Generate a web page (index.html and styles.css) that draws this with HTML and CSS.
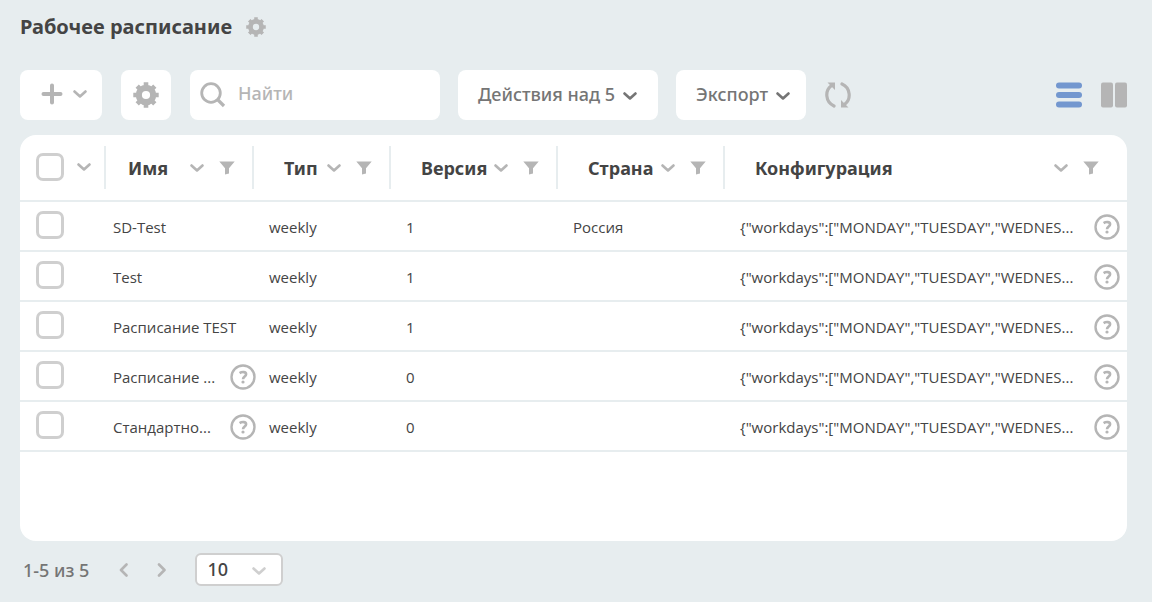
FILE: index.html
```html
<!DOCTYPE html>
<html lang="ru">
<head>
<meta charset="utf-8">
<title>Рабочее расписание</title>
<link rel="stylesheet" href="styles.css">
</head>
<body>
<svg class="sprite" aria-hidden="true">
  <symbol id="gear" viewBox="0 0 26 26"><circle cx="13" cy="13" r="7.200" fill="none" stroke="currentColor" stroke-width="6.200"/><g stroke="currentColor" stroke-width="4.600"><path d="M13 .3V5M13 21v4.700M.3 13H5M21 13h4.700"/><path d="m4.200 4.200 3 3M18.800 18.800l3 3M21.800 4.200l-3 3M4.200 21.800l3-3"/></g></symbol>
  <symbol id="chevron" viewBox="0 0 14 8"><path fill="none" stroke="currentColor" stroke-width="2.600" stroke-linecap="round" stroke-linejoin="round" d="M1.500 1.500 7 6.500l5.500-5"/></symbol>
  <symbol id="funnel" viewBox="0 0 16 14"><path fill="currentColor" d="M.3.500h15.400L10 7.200v5.300l-4 1V7.200z"/></symbol>
  <symbol id="help" viewBox="0 0 26 26"><circle cx="13" cy="13" r="11.500" fill="none" stroke="currentColor" stroke-width="2.400"/><path fill="none" stroke="currentColor" stroke-width="2.600" d="M9.600 9.100c2.300-1.500 6.500-1.600 6.500 1.200 0 2.200-3.100 2.300-3.100 5"/><circle cx="13" cy="18" r="1.600" fill="currentColor"/></symbol>
</svg>

<header class="page-head">
  <h1 class="title">Рабочее расписание</h1>
  <button class="icon-button" aria-label="Настройки страницы"><svg class="gear-small"><use href="#gear"/></svg></button>
</header>

<div class="toolbar">
  <button class="tool add" aria-label="Добавить">
    <svg class="plus" viewBox="0 0 22 22"><path stroke="currentColor" stroke-width="4" stroke-linecap="round" d="M11 2.500v17M2.500 11h17"/></svg>
    <svg class="chevron"><use href="#chevron"/></svg>
  </button>
  <button class="tool settings" aria-label="Настройки"><svg class="gear"><use href="#gear"/></svg></button>
  <label class="search">
    <svg class="lens" viewBox="0 0 26 26"><g fill="none" stroke="currentColor" stroke-width="2.800"><circle cx="11" cy="11" r="9.300"/><path stroke-width="3.200" d="m17.500 17.500 6.500 6.500"/></g></svg>
    <input class="search-input" type="text" placeholder="Найти" aria-label="Найти">
  </label>
  <button class="tool labelled">Действия над 5<svg class="chevron"><use href="#chevron"/></svg></button>
  <button class="tool labelled export">Экспорт<svg class="chevron"><use href="#chevron"/></svg></button>
  <button class="icon-button" aria-label="Обновить"><svg class="refresh" viewBox="0 0 26 26"><g fill="none" stroke="currentColor" stroke-width="3.200" stroke-linecap="round"><path d="M9 24C0 20 0 8.500 6 4"/><path d="M17 2c9 4 9 15.500 3 20"/></g><path fill="currentColor" d="M2.500.5H10V8zM23.500 25.500H16V18z"/></svg></button>
  <div class="views">
    <button class="icon-button list-view" aria-label="Список"><svg class="view" viewBox="0 0 26 26"><g fill="currentColor"><rect y="0.500" width="26" height="6" rx="3"/><rect y="10" width="26" height="6" rx="3"/><rect y="19.500" width="26" height="6" rx="3"/></g></svg></button>
    <button class="icon-button" aria-label="Колонки"><svg class="view" viewBox="0 0 26 26"><g fill="currentColor"><rect y="0.500" width="12" height="25" rx="2"/><rect x="14" y="0.500" width="12" height="25" rx="2"/></g></svg></button>
  </div>
</div>

<main class="card">
  <table class="grid">
    <colgroup><col class="c-check"><col class="c-name"><col class="c-type"><col class="c-version"><col class="c-country"><col></colgroup>
    <thead>
      <tr>
        <th><div class="head head-check"><input class="check" type="checkbox" aria-label="Выбрать все"><svg class="chevron"><use href="#chevron"/></svg></div></th>
        <th><div class="head head-name"><span class="label">Имя</span><svg class="chevron"><use href="#chevron"/></svg><svg class="funnel"><use href="#funnel"/></svg></div></th>
        <th><div class="head"><span class="label">Тип</span><svg class="chevron"><use href="#chevron"/></svg><svg class="funnel"><use href="#funnel"/></svg></div></th>
        <th><div class="head"><span class="label">Версия</span><svg class="chevron"><use href="#chevron"/></svg><svg class="funnel"><use href="#funnel"/></svg></div></th>
        <th><div class="head"><span class="label">Страна</span><svg class="chevron"><use href="#chevron"/></svg><svg class="funnel"><use href="#funnel"/></svg></div></th>
        <th><div class="head head-last"><span class="label">Конфигурация</span><svg class="chevron"><use href="#chevron"/></svg><svg class="funnel"><use href="#funnel"/></svg></div></th>
      </tr>
    </thead>
    <tbody>
      <tr>
        <td class="select"><input class="check" type="checkbox" aria-label="SD-Test"></td>
        <td class="name">SD-Test</td><td>weekly</td><td>1</td><td>Россия</td>
        <td><div class="cell"><span>{"workdays":["MONDAY","TUESDAY","WEDNES...</span><svg class="help"><use href="#help"/></svg></div></td>
      </tr>
      <tr>
        <td class="select"><input class="check" type="checkbox" aria-label="Test"></td>
        <td class="name">Test</td><td>weekly</td><td>1</td><td></td>
        <td><div class="cell"><span>{"workdays":["MONDAY","TUESDAY","WEDNES...</span><svg class="help"><use href="#help"/></svg></div></td>
      </tr>
      <tr>
        <td class="select"><input class="check" type="checkbox" aria-label="Расписание TEST"></td>
        <td class="name">Расписание TEST</td><td>weekly</td><td>1</td><td></td>
        <td><div class="cell"><span>{"workdays":["MONDAY","TUESDAY","WEDNES...</span><svg class="help"><use href="#help"/></svg></div></td>
      </tr>
      <tr>
        <td class="select"><input class="check" type="checkbox" aria-label="Расписание"></td>
        <td class="name"><div class="cell cell-name"><span>Расписание ...</span><svg class="help"><use href="#help"/></svg></div></td><td>weekly</td><td>0</td><td></td>
        <td><div class="cell"><span>{"workdays":["MONDAY","TUESDAY","WEDNES...</span><svg class="help"><use href="#help"/></svg></div></td>
      </tr>
      <tr>
        <td class="select"><input class="check" type="checkbox" aria-label="Стандартное расписание"></td>
        <td class="name"><div class="cell cell-name"><span>Стандартно...</span><svg class="help"><use href="#help"/></svg></div></td><td>weekly</td><td>0</td><td></td>
        <td><div class="cell"><span>{"workdays":["MONDAY","TUESDAY","WEDNES...</span><svg class="help"><use href="#help"/></svg></div></td>
      </tr>
    </tbody>
  </table>
</main>

<footer class="pager">
  <span class="range">1-5 из 5</span>
  <div class="steps">
    <button class="icon-button" aria-label="Назад"><svg class="arrow" viewBox="0 0 10 14"><path fill="none" stroke="currentColor" stroke-width="2.600" stroke-linecap="round" stroke-linejoin="round" d="M7.500 1.500 2 7l5.500 5.500"/></svg></button>
    <button class="icon-button" aria-label="Вперёд"><svg class="arrow" viewBox="0 0 10 14"><path fill="none" stroke="currentColor" stroke-width="2.600" stroke-linecap="round" stroke-linejoin="round" d="M2 1.500 7.500 7 2 12.500"/></svg></button>
  </div>
  <div class="size">
    <select class="size-select" aria-label="Строк на странице"><option>10</option><option>20</option><option>50</option></select>
    <svg class="chevron size-chevron"><use href="#chevron"/></svg>
  </div>
</footer>
</body>
</html>
```

FILE: styles.css
```css
* { box-sizing: border-box; }

body {
  margin: 0;
  padding: 12px 25px 16px 20px;
  background: #e7edef;
  color: #444;
  font-family: "Noto Sans", "Open Sans", sans-serif;
}

button, input, select { font: inherit; }
svg { display: block; flex: none; }
.sprite { position: absolute; width: 0; height: 0; }

.page-head { display: flex; align-items: center; gap: 14px; height: 30px; }
.title { margin: 0; font-size: 20px; line-height: 30px; font-weight: 700; }
.icon-button { padding: 0; border: 0; background: none; color: #b5b5b5; cursor: pointer; }
.gear-small { width: 20px; height: 20px; }
.gear { width: 26px; height: 26px; }
.chevron { width: 14px; height: 8px; color: #b5b5b5; }
.funnel { width: 16px; height: 14px; color: #b5b5b5; }

.toolbar { display: flex; align-items: center; height: 50px; margin-top: 28px; }
.tool {
  display: flex;
  align-items: center;
  justify-content: center;
  height: 50px;
  padding: 0 20px;
  border: 0;
  border-radius: 8px;
  background: #fff;
  color: #b5b5b5;
  font-size: 18px;
  font-weight: 500;
  cursor: pointer;
}
.add { gap: 10px; width: 82px; padding: 0 0 2px 6px; margin-right: 19px; }
.plus { width: 22px; height: 22px; }
.settings { width: 50px; padding: 0; margin-right: 19px; }
.search {
  display: flex;
  align-items: center;
  gap: 12px;
  width: 250px;
  height: 50px;
  margin-right: 18px;
  padding: 0 10px;
  border-radius: 8px;
  background: #fff;
  color: #b5b5b5;
}
.lens { width: 26px; height: 26px; }
.search-input {
  flex: 1;
  min-width: 0;
  padding: 0 0 4px;
  border: 0;
  outline: 0;
  background: none;
  color: #444;
  font-size: 18px;
  font-weight: 500;
}
.search-input::placeholder { color: #b5b5b5; opacity: 1; }
.labelled { gap: 8px; margin-right: 18px; padding: 0 21px 2px 20px; color: #757575; white-space: nowrap; }
.labelled .chevron { margin-top: 4px; color: #757575; }
.export { margin-right: 19px; padding-right: 16px; }
.refresh { width: 26px; height: 26px; }
.views { display: flex; gap: 19px; margin-left: auto; }
.view { width: 26px; height: 26px; }
.list-view { color: #7397cf; }

.card { min-height: 406px; margin-top: 15px; border-radius: 16px; background: #fff; overflow: hidden; }
.grid { width: 100%; table-layout: fixed; border-collapse: separate; border-spacing: 0; }
.c-check { width: 86px; }
.c-name { width: 148px; }
.c-type { width: 137px; }
.c-version { width: 167px; }
.c-country { width: 167px; }
th { height: 67px; padding: 0; border-bottom: 2px solid #e7edef; text-align: left; }
.head {
  display: flex;
  align-items: center;
  gap: 15px;
  height: 43px;
  padding: 0 17px 0 30px;
  border-right: 2px solid #e7edef;
  font-size: 18px;
  font-weight: 700;
}
.head .label { flex: 1; margin-right: -15px; }
.head-check { gap: 13px; padding: 0 0 2px 16px; }
.head-name { padding-left: 22px; }
.head-last { padding-right: 28px; border-right: 0; }
td {
  height: 50px;
  padding: 2px 0 0 15px;
  border-bottom: 2px solid #e7edef;
  font-family: "Open Sans", sans-serif;
  font-size: 15px;
  line-height: 20px;
  white-space: nowrap;
}
td.select { padding: 0 0 2px 16px; }
td.name { padding-left: 7px; }
.cell { display: flex; align-items: center; justify-content: space-between; padding-right: 7px; }
.cell-name { padding-right: 0; margin-right: -2px; }
.help { width: 26px; height: 26px; color: #b5b5b5; }
.check {
  display: block;
  appearance: none;
  width: 28px;
  height: 28px;
  margin: 0;
  border: 3px solid #cfcfcf;
  border-radius: 7px;
  background: #fff;
}

.pager { display: flex; align-items: center; margin-top: 12px; padding-left: 3px; }
.range { color: #757575; font-size: 18px; line-height: 24px; font-weight: 500; }
.steps { display: flex; gap: 28px; margin: 0 28px 0 30px; }
.arrow { width: 10px; height: 14px; }
.size { position: relative; width: 88px; }
.size-select {
  display: block;
  appearance: none;
  width: 100%;
  height: 33px;
  padding: 0 10px 2px;
  border: 2px solid #cfcfcf;
  border-radius: 6px;
  background: #fff;
  color: #444;
  font-size: 18px;
  font-weight: 500;
}
.size-chevron { position: absolute; top: 14px; right: 17px; color: #cfcfcf; pointer-events: none; }
```
